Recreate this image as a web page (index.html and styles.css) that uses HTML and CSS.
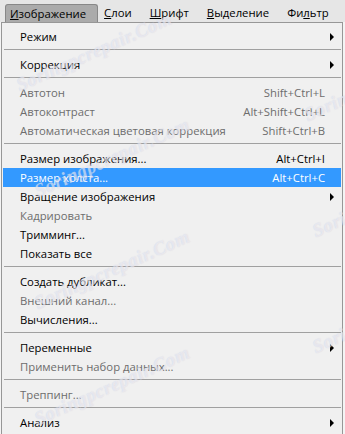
FILE: index.html
```html
<!DOCTYPE html>
<html lang="ru">
<head>
<meta charset="utf-8">
<link rel="stylesheet" href="styles.css">
</head>
<body>
<div class="screen">
  <div class="menubar">
    <span class="top active"><u>И</u>зображение</span>
    <span class="top"><u>С</u>лои</span>
    <span class="top"><u>Ш</u>рифт</span>
    <span class="top"><u>В</u>ыделение</span>
    <span class="top">Фи<u>л</u>ьтр</span>
    <span class="top"><u>З</u></span>
  </div>
  <div class="menu">
    <div class="item sub"><span class="label">Режим</span><span class="arrow"></span></div>
    <div class="sep"></div>
    <div class="item sub"><span class="label">Коррекция</span><span class="arrow"></span></div>
    <div class="sep"></div>
    <div class="item dis"><span class="label">Автотон</span><span class="key">Shift+Ctrl+L</span></div>
    <div class="item dis"><span class="label">Автоконтраст</span><span class="key">Alt+Shift+Ctrl+L</span></div>
    <div class="item dis"><span class="label">Автоматическая цветовая коррекция</span><span class="key">Shift+Ctrl+B</span></div>
    <div class="sep"></div>
    <div class="item"><span class="label">Размер изображения...</span><span class="key">Alt+Ctrl+I</span></div>
    <div class="item hl"><span class="label">Размер холста...</span><span class="key">Alt+Ctrl+C</span></div>
    <div class="item sub"><span class="label">Вращение изображения</span><span class="arrow"></span></div>
    <div class="item dis"><span class="label">Кадрировать</span></div>
    <div class="item"><span class="label">Тримминг...</span></div>
    <div class="item"><span class="label">Показать все</span></div>
    <div class="sep"></div>
    <div class="item"><span class="label">Создать дубликат...</span></div>
    <div class="item dis"><span class="label">Внешний канал...</span></div>
    <div class="item"><span class="label">Вычисления...</span></div>
    <div class="sep"></div>
    <div class="item sub"><span class="label">Переменные</span><span class="arrow"></span></div>
    <div class="item dis"><span class="label">Применить набор данных...</span></div>
    <div class="sep"></div>
    <div class="item dis"><span class="label">Треппинг...</span></div>
    <div class="sep"></div>
    <div class="item sub"><span class="label">Анализ</span><span class="arrow"></span></div>
  </div>
  <span class="wm wm1">Soringpcrepair.Com</span>
  <span class="wm wm2">Soringpcrepair.Com</span>
  <span class="wm wm3">Soringpcrepair.Com</span>
  <span class="wm wm4">Soringpcrepair.Com</span>
  <span class="wm wm5">Soringpcrepair.Com</span>
  <span class="wm wm6">Soringpcrepair.Com</span>
  <span class="wm wm7">Soringpcrepair.Com</span>
</div>
</body>
</html>
```
FILE: styles.css
```css
html, body {
  margin: 0;
  padding: 0;
  background: #f4f4f4;
}
.screen {
  position: relative;
  width: 345px;
  height: 434px;
  overflow: hidden;
  font-family: "Open Sans", "Noto Sans", sans-serif;
  font-size: 11.3px;
  color: #000;
}
.menubar {
  height: 22px;
  background: #e6e6e6;
  display: flex;
  align-items: flex-end;
  white-space: nowrap;
}
.top {
  height: 18px;
  line-height: 17px;
  padding: 0 9px;
  color: #000;
}
.top u { text-decoration: underline; }
.top.active {
  margin-left: 5px;
  padding: 0 11px 0 4px;
  margin-right: -3px;
  background: #ababab;
  border: 1px solid #888;
  border-bottom: none;
  border-radius: 3px 3px 0 0;
  height: 17px;
}
.menu {
  margin-left: 1px;
  width: 340px;
  height: 410px;
  border: 1px solid #979797;
  background: #f0f0f0;
  padding: 4px 0 0;
}
.item {
  height: 19px;
  margin: 0 1px;
  display: flex;
  align-items: center;
  padding: 0 16px 0 17px;
  white-space: nowrap;
}
.item .label { flex: 1; }
.item .key { text-align: right; }
.item.dis { color: #6d6d6d; }
.item.hl { background: #3399ff; color: #fff; }
.item.sub { padding-right: 7px; }
.arrow {
  width: 0;
  height: 0;
  border-top: 4px solid transparent;
  border-bottom: 4px solid transparent;
  border-left: 4px solid #000;
}
.sep {
  height: 9px;
  box-sizing: border-box;
  padding-top: 3px;
  margin: 0 1px 0 2px;
}
.sep::before {
  content: "";
  display: block;
  border-top: 1px solid #a0a0a0;
}
.wm {
  position: absolute;
  font-family: "Liberation Serif", serif;
  font-style: italic;
  font-weight: bold;
  font-size: 19px;
  color: rgba(255, 255, 255, 0.5);
  text-shadow: 0 0 1px rgba(150, 150, 190, 0.4);
  transform: rotate(-24deg);
  transform-origin: left bottom;
  white-space: nowrap;
  pointer-events: none;
  letter-spacing: 0.5px;
}
.wm1 { left: 22px; top: 74px; }
.wm2 { left: 40px; top: 180px; }
.wm3 { left: 40px; top: 292px; }
.wm4 { left: 40px; top: 408px; }
.wm5 { left: 310px; top: 104px; }
.wm6 { left: 318px; top: 220px; }
.wm7 { left: 318px; top: 336px; }
```
